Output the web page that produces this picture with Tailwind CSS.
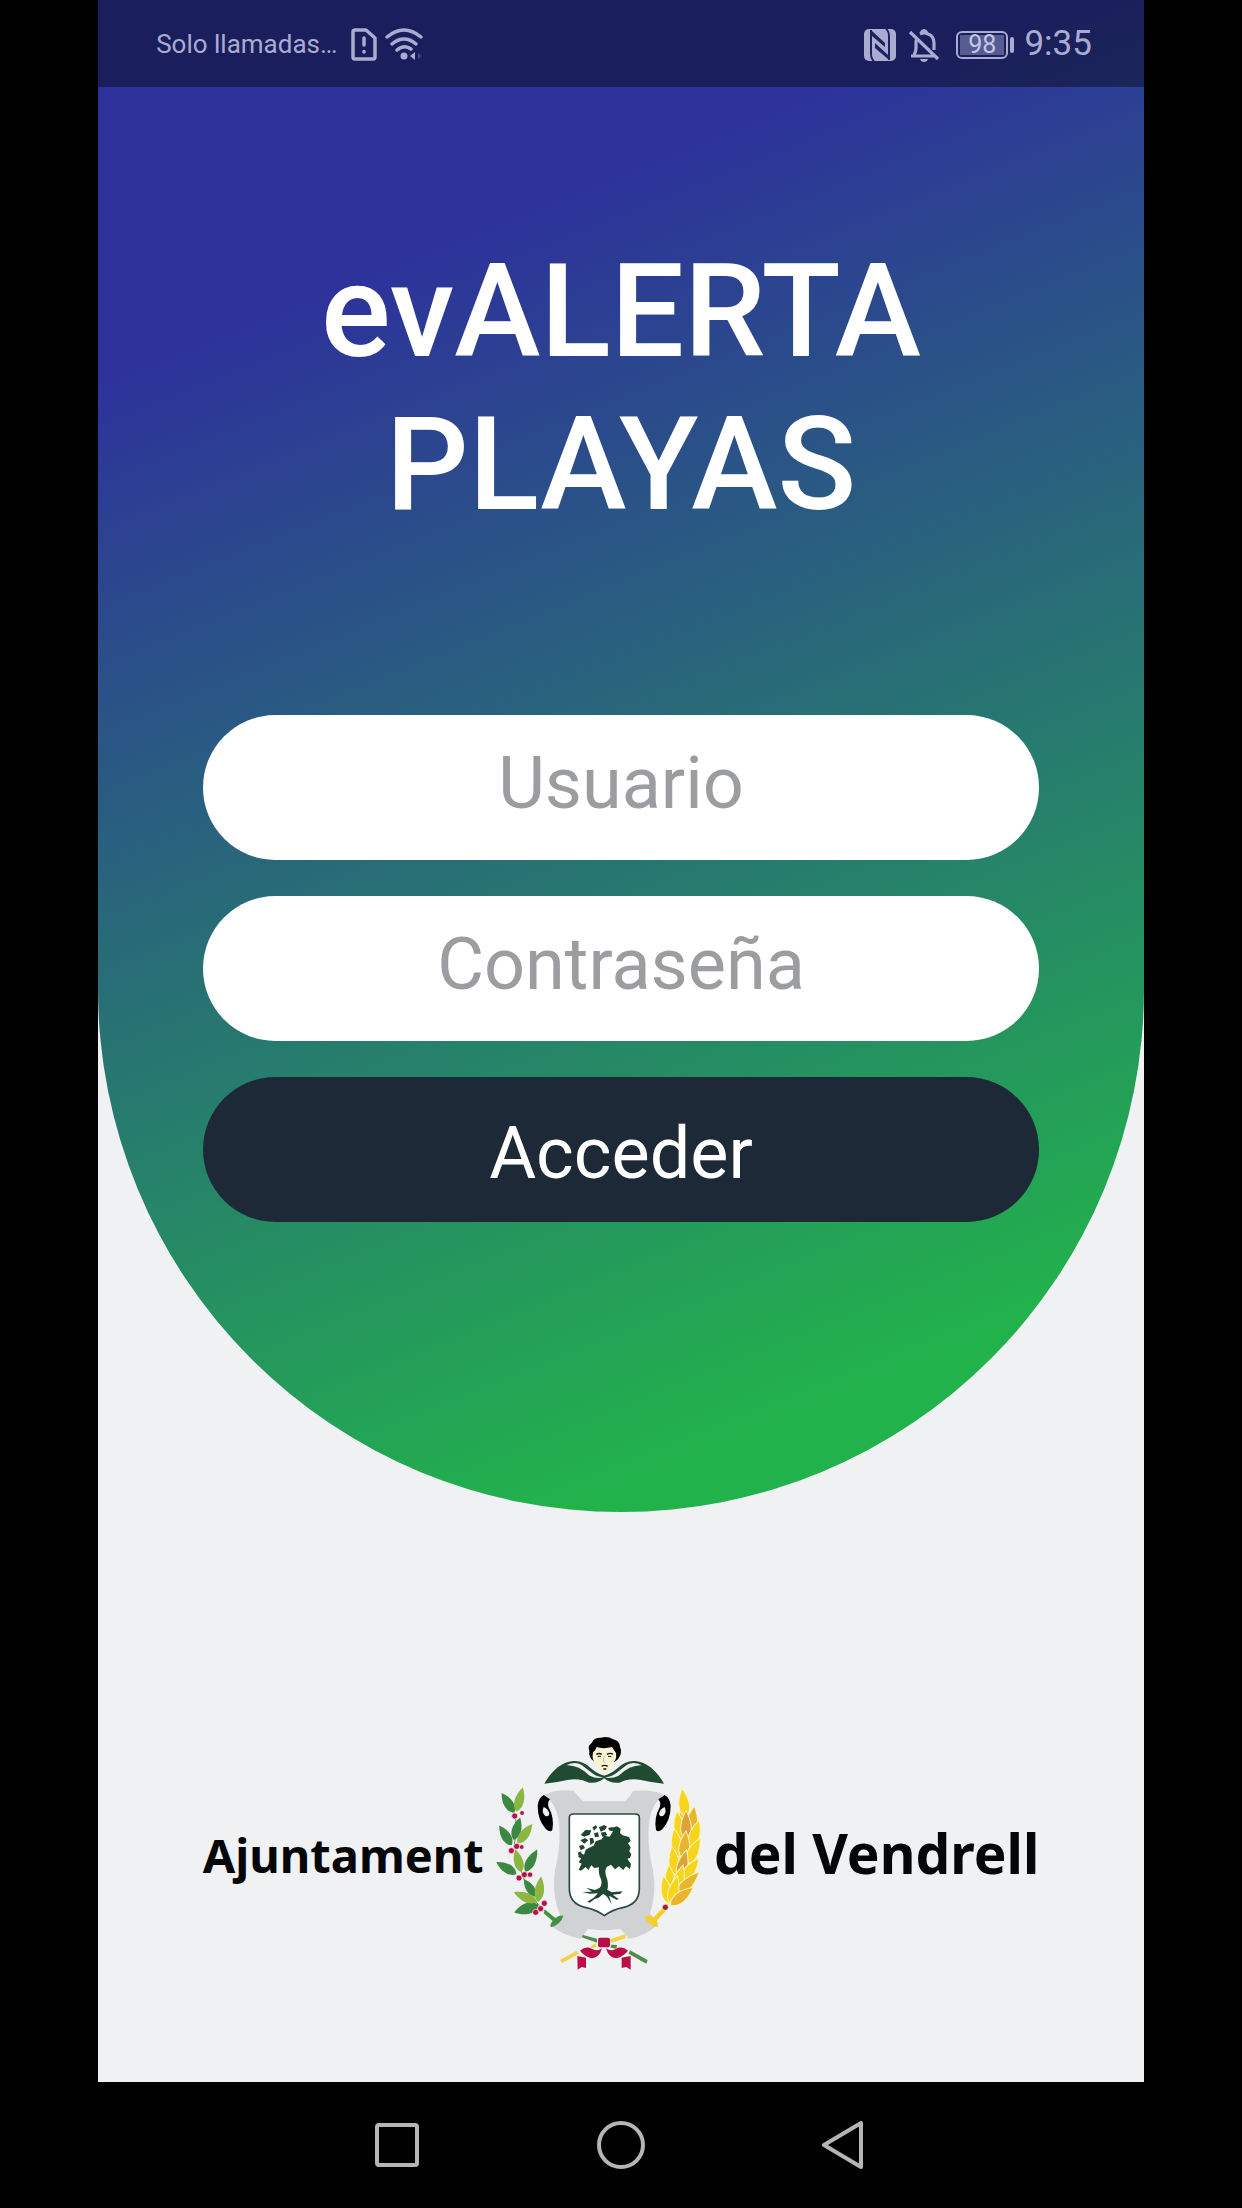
<!DOCTYPE html>
<html lang="es">
<head>
    <meta charset="UTF-8">
    <meta name="viewport" content="width=device-width, initial-scale=1.0">
    <title>evALERTA PLAYAS</title>
    <script src="https://cdn.jsdelivr.net/npm/@tailwindcss/browser@4"></script>
</head>
<body class="bg-black min-h-screen font-['Roboto',sans-serif]">
    <div class="w-[84.2%] mx-auto min-h-screen flex flex-col">
        <div class="flex-1 flex flex-col bg-[#eff1f3]">
            <!-- Login panel -->
            <div class="rounded-b-[523px] bg-[linear-gradient(158deg,#2d329b_350px,#22b24c_1570px)] pb-[290px]">
                <header class="h-[87px] bg-black/40 pl-[58px] pr-[52px] pt-0.5 flex items-center text-[#a9acd0]">
                    <span class="text-[26px]">Solo llamadas…</span>
                    <svg class="ml-3.5 w-[26px] h-[33px]" viewBox="0 0 26 33" fill="none" stroke="currentColor" stroke-width="3.5" stroke-linejoin="round" stroke-linecap="round">
                        <path d="M4 2H15L24 10V29Q24 31 22 31H4Q2 31 2 29V4Q2 2 4 2Z"/>
                        <path d="M13 10V17M13 23.500V24"/>
                    </svg>
                    <svg class="ml-2 w-[40px] h-[33px]" viewBox="0 0 40 33" fill="none" stroke="currentColor" stroke-width="3.500" stroke-linecap="round">
                        <path d="M2 9Q19 -5 36 9M7 16Q19 6 31 16M12 22Q19 16 26 21"/>
                        <circle cx="19" cy="28" r="3.500" fill="currentColor" stroke="none"/>
                        <path d="M30 24V32L25 28Z" fill="currentColor" stroke="none"/>
                        <path d="M33 25V31L37 28Z" fill="currentColor" stroke="none" opacity=".3"/>
                    </svg>
                    <svg class="ml-auto w-8 h-8" viewBox="0 0 32 32" fill="none" stroke="#1c225d" stroke-width="2">
                        <rect width="32" height="32" rx="5" fill="currentColor" stroke="none"/>
                        <path d="M7 1V25Q7 30 10 32M25 31V7Q25 2 22 0"/>
                        <path d="M8 2L21 14V18L8 7ZM11 14L24 26V30L11 19Z" fill="#1c225d" stroke="none"/>
                    </svg>
                    <svg class="ml-3 w-8 h-[34px]" viewBox="0 0 32 34" fill="none" stroke="currentColor" stroke-width="3.200">
                        <path d="M2 4L30 31"/>
                        <path d="M3 28H26M6 27Q8 24 8 20V15Q8 12 9 11M12 6Q16 4 20 6Q26 8 26 15V22M13 5Q16 0 19 5"/>
                        <path d="M12 31H20Q19 34 16 34Q13 34 12 31Z" fill="currentColor" stroke="none"/>
                    </svg>
                    <span class="ml-4 w-[52px] h-7 rounded-md border-2 border-current p-0.5 flex">
                        <span class="flex-1 flex items-center justify-center bg-[#565b92] text-[#c4c7e2] text-[25px] leading-5">98</span>
                    </span>
                    <span class="ml-0.5 w-1 h-4 rounded-sm bg-current"></span>
                    <span class="ml-2.5 text-[35px]">9:35</span>
                </header>

                <h1 class="mt-[148px] text-center text-white font-medium text-[130px] leading-[153px]">evALERTA<br>PLAYAS</h1>

                <form class="mt-[174px] w-4/5 mx-auto flex flex-col gap-9 text-[72px]">
                    <input type="text" aria-label="Usuario" placeholder="Usuario" class="w-full h-[145px] pb-2 rounded-full bg-white text-center placeholder:text-[#9c9da0]">
                    <input type="password" aria-label="Contraseña" placeholder="Contraseña" class="w-full h-[145px] pb-2 rounded-full bg-white text-center placeholder:text-[#9c9da0]">
                    <button type="submit" class="w-full h-[145px] pt-2 rounded-full bg-[#1e2937] text-white">Acceder</button>
                </form>
            </div>

            <!-- Town hall logo -->
            <div class="mt-[223px] w-4/5 mx-auto flex items-center justify-between font-['Noto_Sans',sans-serif] font-bold text-[#050608] whitespace-nowrap">
                <span class="pt-1 text-[47px]">Ajuntament</span>
                <svg class="w-[208px] h-[236px] shrink-0" viewBox="54 45 624 708">
                    <defs>
                        <path id="leaf" d="M0 0C-18 -12 -19 -42 0 -70C19 -42 18 -12 0 0Z"/>
                        <path id="grain" d="M0 0C-24 -20 -18 -54 0 -88C18 -54 24 -20 0 0Z"/>
                    </defs>

                    <!-- scroll -->
                    <path fill="#d0d2d4" d="M203 224Q235 207 290 212Q303 228 318 244H445Q460 229 468 213Q525 207 560 224Q528 245 517 300Q508 375 528 450Q540 520 519 580L545 612Q500 652 455 656Q444 640 430 627Q381 634 332 627Q324 642 310 656Q260 648 218 615L250 585Q224 530 234 450Q254 375 245 300Q237 250 203 224Z"/>
                    <path id="curl" fill="#000" d="M200 225L219 238Q210 247 215 262Q233 295 226 330Q220 338 207 328Q182 300 182 258Q184 233 200 225Z"/>
                    <path fill="#eff1f3" d="M200 261Q192 276 205 288Q216 292 217 280Q212 265 200 261Z"/>
                    <use href="#curl" transform="translate(763) scale(-1 1)"/>
                    <path fill="#eff1f3" d="M563 261Q571 276 558 288Q547 292 546 280Q551 265 563 261Z"/>

                    <!-- shield -->
                    <path fill="#fff" stroke="#294b43" stroke-width="5" d="M289 282H476Q487 282 487 293V505Q487 552 440 562Q405 569 382 587Q358 569 324 562Q277 552 277 505V293Q277 282 289 282Z"/>
                    <g fill="#1f4630">
                        <path d="M335 384L350 377L356 364L374 358L382 347L398 350L408 334L405 323L420 319L431 326L429 339L437 346L456 351L461 362L453 370L461 382L457 394L463 403L459 414L451 416L462 432L459 447L447 439L439 450L426 439L414 448L402 434L390 440Q381 452 388 470Q396 490 391 509L404 517L437 514L430 521L407 524L426 538L419 539L396 527L404 553L390 530L379 521L365 533L353 537L338 548L331 545L350 533L363 520L339 521L316 516L345 515L328 503L354 510L367 504Q377 496 372 478Q363 460 366 442L352 444L343 436L334 450L326 441L312 452L305 449L314 431L305 427L313 415L303 411L312 400L321 404L326 389Z"/>
                        <path d="M311 345L325 330L343 331L338 344L322 350ZM346 322L357 316L361 322L351 332ZM366 322L381 315L390 320L384 329L371 335ZM393 324L407 321L408 334L398 332ZM351 340L363 337L366 350L354 352ZM371 338L385 335L391 345L377 351ZM310 361L324 354L334 361L322 371ZM338 354L348 354L352 367L340 375ZM306 378L318 374L324 384L311 391ZM303 398L313 394V402L304 408Z"/>
                    </g>

                    <!-- wings and head -->
                    <g id="wing">
                        <path fill="#214a33" d="M202 191Q237 129 288 123Q315 120 340 143Q360 161 382 167V174Q365 191 336 188Q306 173 271 180Q238 188 202 191Z"/>
                        <path fill="#eff1f3" d="M268 136Q293 123 313 134L346 160Q366 174 382 171Q361 178 338 167Q303 134 268 136Z"/>
                    </g>
                    <use href="#wing" transform="translate(763) scale(-1 1)"/>
                    <path fill="#000" d="M350 124Q334 111 337 92Q330 77 345 68Q350 52 372 53Q393 48 408 58Q428 62 429 80Q437 98 424 116L414 125Z"/>
                    <path fill="#f9f3d2" d="M348 97Q356 91 359 81Q379 88 405 81Q411 91 417 99Q420 118 410 126Q406 149 384 160Q360 151 354 129Q344 119 348 97Z"/>
                    <g fill="none" stroke="#171512" stroke-width="4">
                        <path d="M358 103Q367 98 374 103M390 103Q400 97 408 103"/>
                        <path d="M362 109H372M393 109H403" stroke-width="3"/>
                        <path d="M382 106L379 124L387 128" stroke="#b9a984" stroke-width="2"/>
                        <path d="M374 139Q383 133 392 139M379 147H388"/>
                    </g>

                    <!-- olive branch -->
                    <path fill="none" stroke="#4f9b43" stroke-width="3" d="M116 280Q118 340 112 374Q122 430 135 460Q155 530 195 565"/>
                    <g fill="#3d8840">
                        <use href="#leaf" transform="translate(112 278) rotate(-33)"/>
                        <use href="#leaf" transform="translate(104 376) rotate(-32)"/>
                        <use href="#leaf" transform="translate(110 360) rotate(16)"/>
                        <use href="#leaf" transform="translate(118 462) rotate(-59)"/>
                        <use href="#leaf" transform="translate(145 455) rotate(28) scale(1 1.080)"/>
                        <use href="#leaf" transform="translate(175 530) rotate(-33) scale(.9)"/>
                        <use href="#leaf" transform="translate(185 555) rotate(-107) scale(1.200 1.100)"/>
                    </g>
                    <g fill="#8bb63f">
                        <use href="#leaf" transform="translate(118 275) rotate(15) scale(1 1.080)"/>
                        <use href="#leaf" transform="translate(122 370) rotate(37) scale(1 1.040)"/>
                        <use href="#leaf" transform="translate(133 456) rotate(-15)"/>
                        <use href="#leaf" transform="translate(183 546) rotate(7) scale(1 1.100)"/>
                        <use href="#leaf" transform="translate(180 546) rotate(-67) scale(1 1.080)"/>
                    </g>
                    <path fill="#439045" d="M203 568L235 594Q249 585 259 587Q252 613 221 622Q219 611 227 603L200 580Z"/>
                    <g fill="#b80d45" stroke="#eff1f3" stroke-width="2">
                        <circle cx="135" cy="279" r="7"/>
                        <circle cx="113" cy="288" r="9"/>
                        <circle cx="134" cy="381" r="7"/>
                        <circle cx="119" cy="379" r="9"/>
                        <circle cx="103" cy="392" r="9"/>
                        <circle cx="159" cy="464" r="8"/>
                        <circle cx="126" cy="474" r="9"/>
                        <circle cx="142" cy="464" r="9"/>
                        <circle cx="202" cy="550" r="9"/>
                        <circle cx="191" cy="566" r="9"/>
                        <circle cx="176" cy="577" r="9"/>
                    </g>

                    <!-- wheat ear -->
                    <path fill="#f1c62a" d="M616 230Q630 270 660 330Q668 420 640 490Q610 540 580 552Q570 500 590 420Q600 330 616 230Z"/>
                    <g fill="#f7d51d" stroke="#fbf3c2" stroke-width="3">
                        <use href="#grain" transform="translate(626 292) rotate(-7)"/>
                        <use href="#grain" transform="translate(640 345) rotate(8)" fill="#e9b52c"/>
                        <use href="#grain" transform="translate(612 360) rotate(-8)"/>
                        <use href="#grain" transform="translate(627 360)" fill="#dfa23a"/>
                        <use href="#grain" transform="translate(641 384) rotate(17)"/>
                        <use href="#grain" transform="translate(606 412) rotate(-10)"/>
                        <use href="#grain" transform="translate(618 420) rotate(6)" fill="#e9b52c"/>
                        <use href="#grain" transform="translate(630 432) rotate(27)"/>
                        <use href="#grain" transform="translate(597 466) rotate(-8)"/>
                        <use href="#grain" transform="translate(607 475) rotate(14)" fill="#dfa23a"/>
                        <use href="#grain" transform="translate(613 485) rotate(37)"/>
                        <use href="#grain" transform="translate(584 522) rotate(-6)"/>
                        <use href="#grain" transform="translate(594 520) rotate(16)"/>
                        <use href="#grain" transform="translate(596 527) rotate(45) scale(1 1.150)" fill="#e9b52c"/>
                        <use href="#grain" transform="translate(577 553) rotate(-12)"/>
                        <use href="#grain" transform="translate(580 553) rotate(14)"/>
                        <use href="#grain" transform="translate(580 556) rotate(52)" fill="#e9b52c"/>
                    </g>
                    <path fill="#f4cf25" d="M560 561L530 592Q515 584 503 589Q509 614 542 622Q545 612 539 602L567 572Z"/>
                    <circle cx="565" cy="562" r="9" fill="#a5182f" stroke="#fbf3c2" stroke-width="2"/>

                    <!-- ribbon -->
                    <path fill="#4c8e45" d="M318 645L360 656V668L314 652ZM402 674L420 675L418 686L401 683ZM459 691L512 720L508 731L455 701Z"/>
                    <path fill="#f3d344" d="M445 642L447 654L403 669L400 658ZM343 677L357 670V683L342 684ZM299 692L306 701L256 729L249 720Z"/>
                    <g fill="#b80d45">
                        <rect x="363" y="653" width="36" height="29" rx="6"/>
                        <path d="M309 692Q327 676 346 687Q362 696 375 685Q367 714 343 715Q320 707 309 692ZM453 692Q435 676 416 687Q400 696 387 685Q395 714 419 715Q442 707 453 692Z"/>
                        <path d="M301 708L327 713V744L314 741L302 749ZM461 708L434 713V744L448 741L461 749Z"/>
                    </g>
                </svg>
                <span class="text-[55px]">del Vendrell</span>
            </div>
        </div>

        <!-- System navigation -->
        <nav class="h-[126px] flex items-center justify-center gap-44 text-[#b5b5b5]">
            <button type="button" aria-label="Recientes">
                <svg class="w-12 h-12" viewBox="0 0 48 48" fill="none" stroke="currentColor" stroke-width="4"><rect x="4" y="4" width="40" height="40" rx="2"/></svg>
            </button>
            <button type="button" aria-label="Inicio">
                <svg class="w-12 h-12" viewBox="0 0 48 48" fill="none" stroke="currentColor" stroke-width="4"><circle cx="24" cy="24" r="22"/></svg>
            </button>
            <button type="button" aria-label="Atrás">
                <svg class="w-12 h-12" viewBox="0 0 48 48" fill="none" stroke="currentColor" stroke-width="4" stroke-linejoin="round"><path d="M40 2V46L3 24Z"/></svg>
            </button>
        </nav>
    </div>
</body>
</html>
